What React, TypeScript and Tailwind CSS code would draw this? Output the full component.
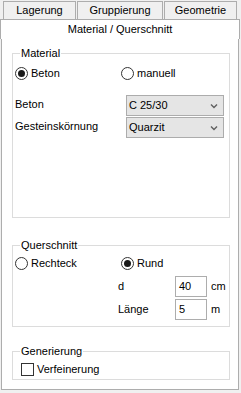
import React from "react";

const font = { fontFamily: '"Liberation Sans", Arial, sans-serif' };

const Radio = ({ checked, label }: { checked?: boolean; label: string }) => (
  <div className="flex items-center gap-[3px]">
    <span className="w-[13px] h-[13px] rounded-full border border-[#333] bg-white flex items-center justify-center">
      {checked && <span className="w-[7px] h-[7px] rounded-full bg-[#1a1a1a]" />}
    </span>
    <span>{label}</span>
  </div>
);

const Select = ({ value }: { value: string }) => (
  <div className="w-[98px] h-[21px] border border-[#acacac] bg-[#e5e5e5] flex items-center justify-between pl-[2px] pr-[5px]">
    <span>{value}</span>
    <svg width="8" height="6" viewBox="0 0 8 6">
      <path d="M1 1.5 L4 4.5 L7 1.5" fill="none" stroke="#606060" strokeWidth="1.4" />
    </svg>
  </div>
);

const Field = ({ value }: { value: string }) => (
  <div className="w-[32px] h-[21px] border border-[#adadad] bg-white flex items-center pl-[3px]">
    {value}
  </div>
);

const Tab = ({ label, w }: { label: string; w: string }) => (
  <div
    className={`${w} h-[18px] border border-b-0 border-[#adadad] bg-[#f0f0f0] flex items-center justify-center`}
  >
    {label}
  </div>
);

const Group = ({
  title,
  h,
  mt,
  children,
}: {
  title: string;
  h: string;
  mt: string;
  children: React.ReactNode;
}) => (
  <fieldset className={`${h} ${mt} ml-[10px] w-[218px] border border-[#dcdcdc]`}>
    <legend className="ml-[7px] px-[1px] leading-[13px]">{title}</legend>
    {children}
  </fieldset>
);

export default function App() {
  return (
    <div
      className="w-[241px] h-[393px] bg-[#f0f0f0] text-[11px] leading-[13px] text-black overflow-hidden"
      style={font}
    >
      <div className="h-[19px] flex items-end pl-[3px] gap-[1px]">
        <Tab label="Lagerung" w="w-[73px]" />
        <Tab label="Gruppierung" w="w-[86px]" />
        <Tab label="Geometrie" w="w-[73px]" />
      </div>
      <div className="w-[240px] h-[20px] border border-b-0 border-[#adadad] bg-white flex items-center justify-center">
        Material / Querschnitt
      </div>
      <div className="ml-[1px] w-[238px] h-[351px] border border-t-0 border-[#adadad] bg-white flex flex-col">
        <Group title="Material" h="h-[171px]" mt="mt-[8px]">
          <div className="pl-[2px] flex flex-col">
            <div className="mt-[6px] h-[15px] flex items-center">
              <div className="w-[106px]">
                <Radio checked label="Beton" />
              </div>
              <Radio label="manuell" />
            </div>
            <div className="mt-[14px] flex items-center">
              <span className="w-[111px] -mt-[2px]">Beton</span>
              <Select value="C 25/30" />
            </div>
            <div className="mt-[1px] flex items-center">
              <span className="w-[111px] -mt-[2px]">Gesteinskörnung</span>
              <Select value="Quarzit" />
            </div>
          </div>
        </Group>
        <Group title="Querschnitt" h="h-[88px]" mt="mt-[21px]">
          <div className="pl-[2px] flex flex-col">
            <div className="mt-[4px] h-[15px] flex items-center">
              <div className="w-[106px]">
                <Radio label="Rechteck" />
              </div>
              <Radio checked label="Rund" />
            </div>
            <div className="mt-[5px] pl-[103px] flex items-center">
              <span className="w-[57px]">d</span>
              <Field value="40" />
              <span className="ml-[4px]">cm</span>
            </div>
            <div className="mt-[2px] pl-[103px] flex items-center">
              <span className="w-[57px]">Länge</span>
              <Field value="5" />
              <span className="ml-[4px]">m</span>
            </div>
          </div>
        </Group>
        <Group title="Generierung" h="h-[35px]" mt="mt-[18px]">
          <div className="mt-[5px] pl-[8px] flex items-center gap-[3px]">
            <span className="w-[13px] h-[13px] border border-[#333] bg-white" />
            <span>Verfeinerung</span>
          </div>
        </Group>
      </div>
    </div>
  );
}
